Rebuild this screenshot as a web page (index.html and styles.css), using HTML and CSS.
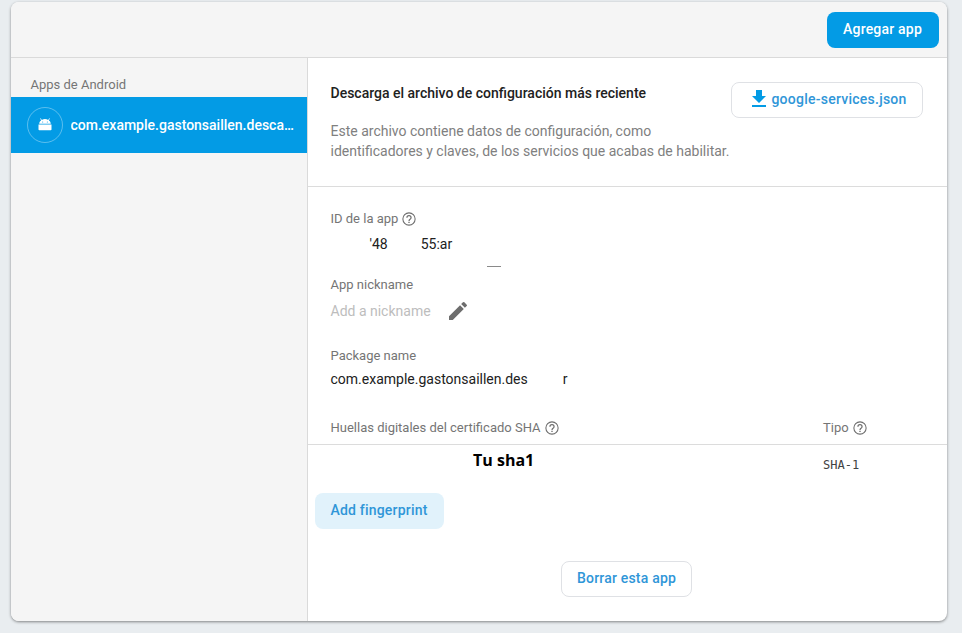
FILE: index.html
```html
<!DOCTYPE html>
<html lang="es">
<head>
  <meta charset="UTF-8" />
  <title>Apps de Android</title>
  <link rel="stylesheet" href="styles.css">
</head>
<body>
  <div class="card">
    <div class="card-header">
      <button class="btn btn-primary">Agregar app</button>
    </div>

    <div class="card-body">
      <div class="sidebar">
        <div class="sidebar-title">Apps de Android</div>
        <div class="app-row">
          <div class="app-icon">
            <svg class="android" width="14" height="14" viewBox="0 0 14 14" fill="#fff">
              <path d="M.5 7.500h13v5a.8.8 0 0 1-.8.8H1.300a.8.8 0 0 1-.8-.8z"/>
              <path fill-rule="evenodd" d="M1.200 6.700c.1-1.500.8-2.600 1.900-3.200L2.200 1.600l.6-.4 1 1.800a6 6 0 0 1 6.400 0l1-1.800.6.4-.9 1.900c1.100.6 1.800 1.700 1.900 3.200zM4.700 4.400a.5.5 0 1 0 0 1 .5.5 0 0 0 0-1zm4.600 0a.5.5 0 1 0 0 1 .5.5 0 0 0 0-1z"/>
            </svg>
          </div>
          <div class="app-name">com.example.gastonsaillen.descargas</div>
        </div>
      </div>

      <div class="main">
        <div class="download">
          <div class="download-text">
            <div class="download-title">Descarga el archivo de configuración más reciente</div>
            <p class="download-desc">Este archivo contiene datos de configuración, como identificadores y claves, de los servicios que acabas de habilitar.</p>
          </div>
          <button class="btn btn-outline btn-json">
            <svg width="24" height="24" viewBox="0 0 24 24" fill="#039be5"><path d="M19 9h-4V3H9v6H5l7 7 7-7zM5 18v2h14v-2H5z"/></svg>
            google-services.json
          </button>
        </div>

        <div class="details">
          <div class="label">ID de la app
            <svg class="help" viewBox="0 0 24 24"><use href="#help"/></svg>
          </div>
          <div class="value value-id"><span class="id-a">'48</span><span class="id-b">55:ar</span></div>
          <div class="scrap"></div>

          <div class="label label-nick">App nickname</div>
          <div class="nick-row">
            <span class="nick">Add a nickname</span>
            <svg width="24" height="24" viewBox="0 0 24 24" fill="#6d6d6d"><path d="M3 17.250V21h3.750L17.810 9.940l-3.750-3.750L3 17.250zM20.710 7.040a1 1 0 0 0 0-1.410l-2.340-2.340a1 1 0 0 0-1.410 0l-1.830 1.830 3.750 3.750 1.830-1.830z"/></svg>
          </div>

          <div class="label label-package">Package name</div>
          <div class="value value-package"><span>com.example.gastonsaillen.des</span><span class="pkg-end">r</span></div>
        </div>

        <div class="sha-head">
          <div class="label sha-col">Huellas digitales del certificado SHA
            <svg class="help" viewBox="0 0 24 24"><use href="#help"/></svg>
          </div>
          <div class="label type-col">Tipo
            <svg class="help" viewBox="0 0 24 24"><use href="#help"/></svg>
          </div>
        </div>
        <div class="sha-row">
          <div class="sha-value">Tu sha1</div>
          <div class="sha-type">SHA-1</div>
        </div>

        <button class="btn btn-soft">Add fingerprint</button>

        <div class="delete-row">
          <button class="btn btn-outline btn-delete">Borrar esta app</button>
        </div>
      </div>
    </div>
  </div>

  <svg width="0" height="0" class="defs">
    <symbol id="help" viewBox="0 0 24 24">
      <path fill="#6d6d6d" d="M12 2a10 10 0 1 0 0 20 10 10 0 0 0 0-20zm0 18.400a8.400 8.400 0 1 1 0-16.800 8.400 8.400 0 0 1 0 16.800zM11 16h2v2h-2zm1-10a4 4 0 0 0-4 4h1.800a2.200 2.200 0 1 1 4.400 0c0 2-3.100 1.750-3.100 5h1.800c0-2.250 3.100-2.500 3.100-5a4 4 0 0 0-4-4z"/>
    </symbol>
  </svg>
</body>
</html>
```

FILE: styles.css
```css
* {
  box-sizing: border-box;
}

body {
  margin: 0;
  padding: 2px 15px 12px 11px;
  height: 633px;
  overflow: hidden;
  background: #e9edf0;
  font-family: Roboto, sans-serif;
  font-size: 14px;
  color: #212121;
}

.defs {
  position: absolute;
}

.card {
  height: 619px;
  background: #fff;
  border-radius: 8px;
  box-shadow: 0 1px 3px rgba(0, 0, 0, 0.45);
  overflow: hidden;
  display: flex;
  flex-direction: column;
}

.card-header {
  height: 56px;
  flex: none;
  background: #f5f5f5;
  border-bottom: 1px solid #dadada;
  display: flex;
  align-items: flex-start;
  justify-content: flex-end;
  padding: 10px 8px 0 0;
}

.btn {
  height: 36px;
  border-radius: 8px;
  border: none;
  padding: 0 16px 2px;
  font-family: Roboto, sans-serif;
  font-size: 14px;
  font-weight: 500;
  letter-spacing: 0.2px;
  background: none;
}

.btn-primary {
  background: #039be5;
  color: #fff;
  width: 112px;
  padding: 0 1px 2px 0;
}

.btn-outline {
  background: #fff;
  border: 1px solid #dfe1e5;
  color: #2f96d8;
}

.btn-delete {
  width: 131px;
  padding: 0 0 2px;
}

.btn-soft {
  display: block;
  width: 129px;
  margin: 30px 0 0 7px;
  padding: 0 1px 2px 0;
  background: #e1f2fb;
  color: #2f96d8;
}

.card-body {
  flex: 1;
  display: flex;
}

.sidebar {
  width: 297px;
  flex: none;
  background: #f5f5f5;
  border-right: 1px solid #dadada;
}

.sidebar-title {
  height: 39px;
  padding: 19px 0 0 19.500px;
  font-size: 13px;
  line-height: 15px;
  color: #757575;
}

.app-row {
  height: 56px;
  background: #039be5;
  display: flex;
  align-items: center;
  padding: 0 11px 0 16px;
}

.app-icon {
  width: 36px;
  height: 36px;
  flex: none;
  border: 1px solid rgba(255, 255, 255, 0.35);
  border-radius: 50%;
  display: flex;
  align-items: center;
  justify-content: center;
}

.android {
  margin-bottom: 2px;
}

.app-name {
  margin-left: 7.500px;
  color: #fff;
  font-weight: 500;
  overflow: hidden;
  white-space: nowrap;
  text-overflow: ellipsis;
}

.main {
  flex: 1;
  min-width: 0;
}

.download {
  height: 129px;
  border-bottom: 1px solid #dcdcdc;
  display: flex;
  justify-content: space-between;
  padding: 24px 24px 0 22.500px;
}

.download-text {
  width: 400px;
  padding-top: 2px;
}

.download-title {
  font-size: 14px;
  font-weight: 500;
  line-height: 20px;
  margin-top: -1px;
}

.download-desc {
  margin: 18px 0 0;
  line-height: 20px;
  color: #808080;
}

.btn-json {
  width: 192px;
  padding: 0 0 2px;
  letter-spacing: 0.25px;
  display: flex;
  align-items: center;
  justify-content: center;
}

.details {
  padding: 24px 22.500px 0;
}

.label {
  display: flex;
  align-items: center;
  font-size: 13px;
  line-height: 16px;
  color: #757575;
}

.help {
  width: 16px;
  height: 16px;
  margin-left: 3px;
}

.value {
  line-height: 20px;
  font-size: 14px;
}

.value-id {
  margin-top: 7px;
  height: 20px;
}

.id-a {
  margin-left: 39px;
}

.id-b {
  margin-left: 33px;
}

.scrap {
  width: 14px;
  height: 1px;
  margin: 12px 0 0 156.500px;
  background: #8a8a8a;
}

.label-nick {
  margin-top: 10px;
}

.nick-row {
  margin-top: 6px;
  height: 24px;
  display: flex;
  align-items: center;
}

.nick {
  width: 115.500px;
  color: #bdbdbd;
}

.label-package {
  margin-top: 25px;
}

.value-package {
  margin-top: 5px;
}

.pkg-end {
  margin-left: 35px;
}

.sha-head {
  margin-top: 31px;
  height: 25px;
  border-bottom: 1px solid #dcdcdc;
  display: flex;
  padding: 0 0 0 22.500px;
}

.sha-col {
  width: 492.500px;
  height: 16px;
}

.type-col {
  height: 16px;
}

.sha-row {
  height: 18px;
  display: flex;
}

.sha-value {
  width: 515px;
  padding: 5px 0 0 165px;
  font-family: "Open Sans", sans-serif;
  font-size: 16px;
  font-weight: 700;
  line-height: 20px;
  color: #000;
}

.sha-type {
  padding-top: 12px;
  font-family: "DejaVu Sans Mono", monospace;
  font-size: 12px;
  line-height: 16px;
  color: #424242;
}

.delete-row {
  margin-top: 32px;
  display: flex;
  justify-content: center;
  padding-right: 2px;
}
```
